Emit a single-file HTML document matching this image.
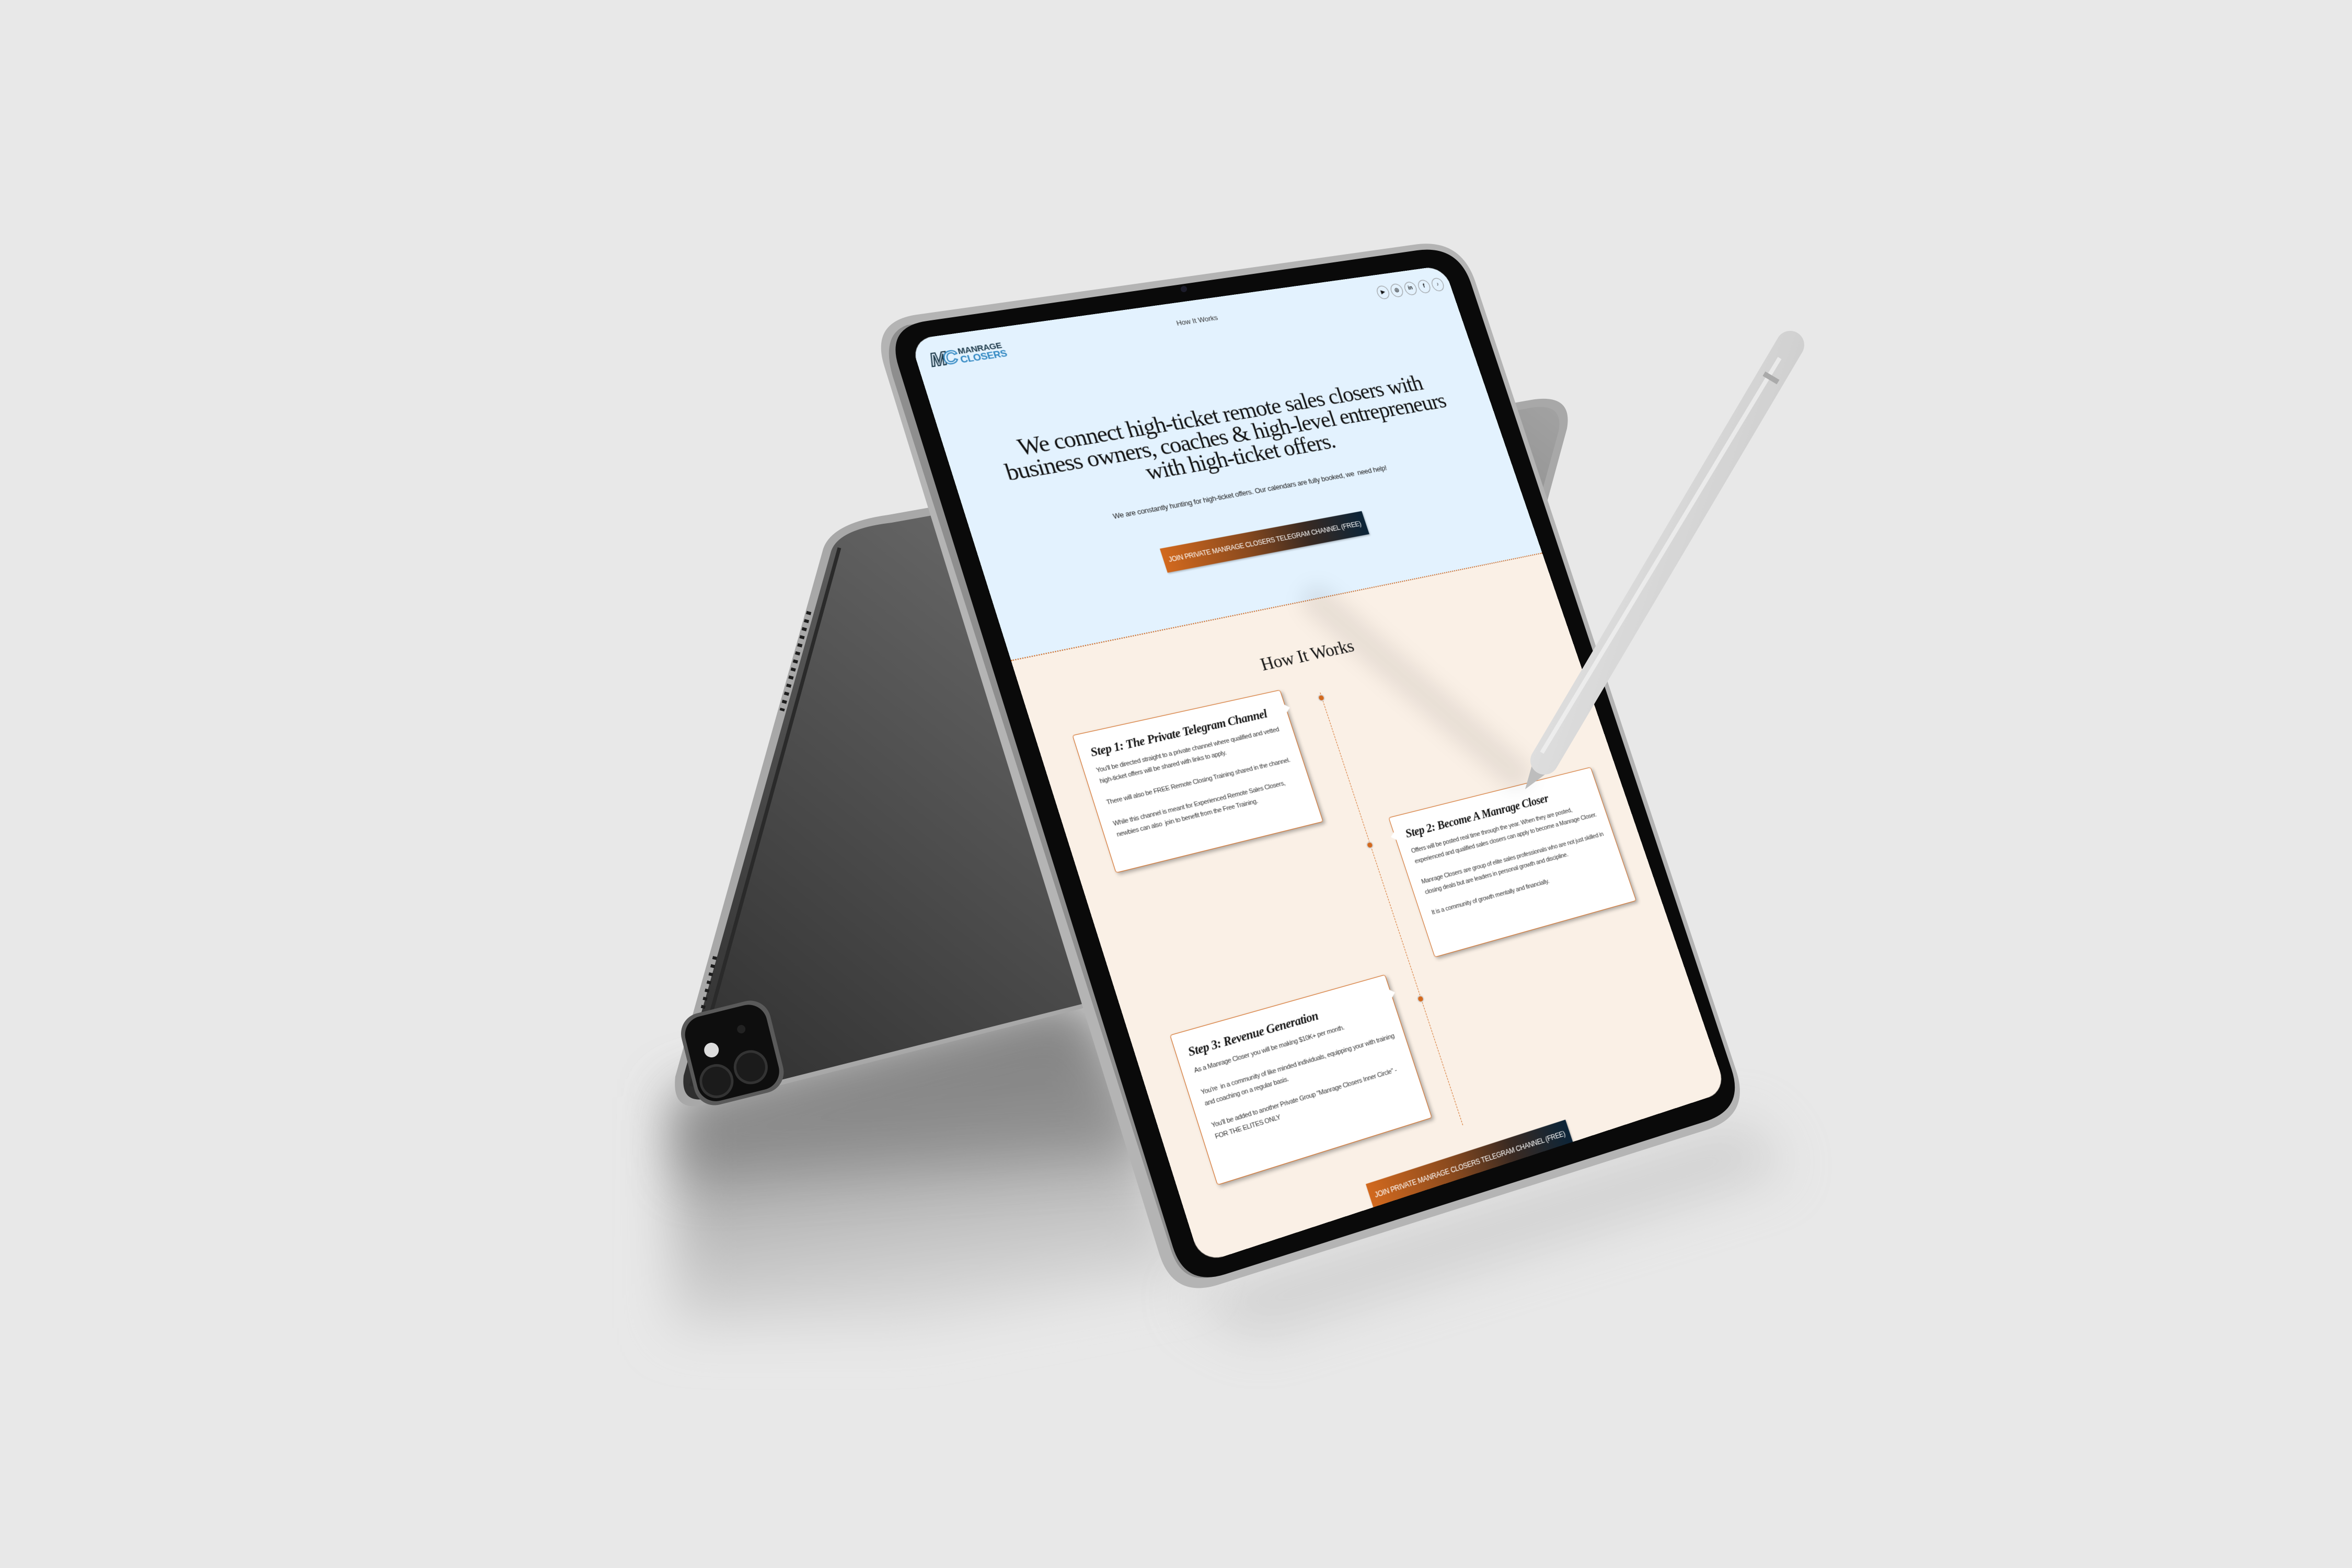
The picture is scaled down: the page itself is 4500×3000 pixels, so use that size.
<!DOCTYPE html>
<html><head><meta charset="utf-8">
<style>
html,body{margin:0;padding:0}
body{width:4500px;height:3000px;background:#e8e8e8;position:relative;overflow:hidden;font-family:"Liberation Sans",sans-serif}
svg.l{position:absolute;left:0;top:0;width:4500px;height:3000px}
#scr{position:absolute;left:0;top:0;width:1000px;height:1600px;transform-origin:0 0;
transform:matrix3d(1.3241,-0.08625,0,0.00010975,0.284625,1.03819,0,-0.000027638,0,0,1,0,1741,650,0,1);
border-radius:38px;overflow:hidden;background:#faf0e6}
.hero{position:absolute;left:0;top:0;width:1000px;height:571px;background:#e3f2fe;border-bottom:2px dotted #d2691e}
.logo{position:absolute;left:22px;top:20px;width:130px;height:40px}
.mc{position:absolute;left:0;top:2px;font:italic 900 34px "Liberation Sans",sans-serif;color:#e3f2fe;-webkit-text-stroke:2px #1d3a4a;letter-spacing:-6px}
.mc b{-webkit-text-stroke:2px #2e86c1}
.lt{position:absolute;left:50px;top:5px;font:900 15px/15px "Liberation Sans",sans-serif;color:#1d3a4a;letter-spacing:-.3px}
.lt span{color:#2e86c1;font-size:17px}
.nav{position:absolute;left:0;width:1000px;top:30px;text-align:center;font-size:13px;color:#333}
.soc{position:absolute;left:852px;top:22px;display:flex;gap:5px}
.soc i{display:block;width:21px;height:24px;border:1px solid #888;border-radius:50%;font:bold 10px/24px "Liberation Sans",sans-serif;text-align:center;font-style:normal;color:#111}
h1{position:absolute;left:0;top:196px;width:1000px;margin:0;text-align:center;font:400 42px/40px "Liberation Serif",serif;letter-spacing:-1.3px;color:#111}
.sub{position:absolute;left:0;top:354px;width:1000px;text-align:center;font-size:13px;color:#222;letter-spacing:-.3px}
.btn{position:absolute;left:304px;width:380px;height:44px;background:linear-gradient(90deg,#d2691e 0%,#8a4a1e 40%,#3a2a22 70%,#0b2438 100%);color:#fff;font:12px/44px "Liberation Sans",sans-serif;text-align:center;letter-spacing:-.3px;box-shadow:1px 2px 3px rgba(0,0,0,.25)}
h2{position:absolute;left:0;top:648px;width:1000px;margin:0;text-align:center;font:400 32px "Liberation Serif",serif;color:#111;letter-spacing:-.5px}
.line{position:absolute;left:500px;top:736px;height:780px;border-left:1px dashed #d2691e}
.dot{position:absolute;left:495px;width:9px;height:9px;border-radius:50%;background:#d2691e;box-shadow:0 0 0 2px #ddd}
.card{position:absolute;background:#fff;border:1px solid #d2691e;border-radius:4px;box-shadow:3px 4px 6px rgba(0,0,0,.3);padding:22px 16px 16px 20px;box-sizing:border-box}
.card h3{margin:0 0 10px;font:italic 700 21px "Liberation Serif",serif;color:#111;letter-spacing:-.5px}
.card p{margin:0 0 18px;font:11px/19px "Liberation Sans Narrow","Liberation Sans",sans-serif;color:#333;letter-spacing:-.35px}
.nr::after{content:"";position:absolute;right:-8px;top:26px;border:7px solid transparent;border-left:8px solid #fff;border-right:0}
.nl::after{content:"";position:absolute;left:-8px;top:26px;border:7px solid transparent;border-right:8px solid #fff;border-left:0}
</style></head><body>

<svg class="l" viewBox="0 0 4500 3000">
<defs>
<filter id="b1" x="-50%" y="-50%" width="200%" height="200%"><feGaussianBlur stdDeviation="50"/></filter>
<linearGradient id="sh" x1="0" y1="0" x2="0.2" y2="1"><stop offset="0" stop-color="#747474"/><stop offset="1" stop-color="#dadada"/></linearGradient>
<linearGradient id="back" x1="1" y1="0" x2="0" y2="1"><stop offset="0" stop-color="#a2a2a2"/><stop offset="0.35" stop-color="#6c6c6c"/><stop offset="1" stop-color="#2e2e2e"/></linearGradient>
</defs>
<polygon points="1290,2100 2070,1910 2280,2440 1750,2540 1290,2540" fill="url(#sh)" filter="url(#b1)"/>
<polygon points="1300,2110 2060,1915 2250,2200 1300,2250" fill="#777" opacity=".5" filter="url(#b1)"/>
<polygon points="2260,2480 3340,2140 3420,2240 2400,2560" fill="#bbb" opacity=".5" filter="url(#b1)"/>
<path d="M1700,985 L2930,765 Q3010,752 2998,820 L2960,960 L2500,1820 L1340,2115 Q1285,2125 1292,2060 L1575,1050 Q1592,1000 1700,985 Z" fill="#a8a8a8"/>
<path d="M1706,1000 L2930,780 Q2992,770 2982,825 L2945,960 L2490,1815 L1352,2102 Q1302,2112 1308,2058 L1590,1055 Q1604,1012 1706,1000 Z" fill="url(#back)"/>
<path d="M1606,1048 L1322,2078" stroke="#2a2a2a" stroke-width="7" fill="none"/>
<path d="M1548,1170 L1496,1360" stroke="#1e1e1e" stroke-width="9" stroke-dasharray="6 10" fill="none"/>
<path d="M1368,1830 L1334,1975" stroke="#1e1e1e" stroke-width="8" stroke-dasharray="6 10" fill="none"/>
<g transform="translate(1400,2020) rotate(-14)">
<rect x="-85" y="-95" width="175" height="180" rx="40" fill="#5a5a5a"/>
<rect x="-78" y="-88" width="160" height="166" rx="36" fill="#0e0e0e"/>
<circle cx="-35" cy="-20" r="14" fill="#ddd"/>
<circle cx="-40" cy="40" r="30" fill="#1b1b1b" stroke="#333" stroke-width="5"/>
<circle cx="30" cy="30" r="30" fill="#1b1b1b" stroke="#333" stroke-width="5"/>
<circle cx="30" cy="-45" r="8" fill="#222"/>
</g>
<path d="M1754,602 L2706,468 Q2795,455 2823,540 L3322,2049 Q3350,2135 3264,2162 L2331,2458 Q2245,2485 2218,2399 L1692,701 Q1665,615 1754,602 Z" fill="#b4b4b4"/>
<path d="M1735,622 L2706,484 Q2785,472 2808,548 L3308,2046 Q3330,2115 3260,2138 L2330,2440 Q2262,2462 2240,2390 L1708,720 Q1685,640 1735,622 Z" fill="#8e8e8e"/>
<path d="M1774,614 L2711,479 Q2790,468 2815,544 L3313,2046 Q3338,2122 3262,2146 L2344,2438 Q2268,2462 2244,2386 L1719,701 Q1695,625 1774,614 Z" fill="#0a0a0a"/>
<circle cx="2265" cy="553" r="6" fill="#1c1c2a"/>
</svg>

<div id="scr">
 <div class="hero">
  <div class="logo"><div class="mc">M<b>C</b></div><div class="lt">MANRAGE<br><span>CLOSERS</span></div></div>
  <div class="nav">How It Works</div>
  <div class="soc"><i>▶</i><i>◎</i><i>in</i><i>f</i><i>♪</i></div>
  <h1>We connect high-ticket remote sales closers with<br>business owners, coaches &amp; high-level entrepreneurs<br>with high-ticket offers.</h1>
  <div class="sub">We are constantly hunting for high-ticket offers. Our calendars are fully booked, we&nbsp; need help!</div>
  <div class="btn" style="top:432px">JOIN PRIVATE MANRAGE CLOSERS TELEGRAM CHANNEL (FREE)</div>
 </div>
 <h2>How It Works</h2>
 <div class="line"></div>
 <div class="dot" style="top:741px"></div>
 <div class="dot" style="top:1010px"></div>
 <div class="dot" style="top:1287px"></div>
 <div class="card nr" style="left:60px;top:716px;width:372px;height:240px">
  <h3>Step 1: The Private Telegram Channel</h3>
  <p>You'll be directed straight to a private channel where qualified and vetted high-ticket offers will be shared with links to apply.</p>
  <p>There will also be FREE Remote Closing Training shared in the channel.</p>
  <p>While this channel is meant for Experienced Remote Sales Closers, newbies can also&nbsp; join to benefit from the Free Training.</p>
 </div>
 <div class="card nl" style="left:548px;top:976px;width:404px;height:254px">
  <h3>Step 2: Become A Manrage Closer</h3>
  <p>Offers will be posted real time through the year. When they are posted, experienced and qualified sales closers can apply to become a Manrage Closer.</p>
  <p>Manrage Closers are group of elite sales professionals who are not just skilled in closing deals but are leaders in personal growth and discipline.</p>
  <p>It is a community of growth mentally and financially.</p>
 </div>
 <div class="card nr" style="left:64px;top:1235px;width:388px;height:254px">
  <h3>Step 3: Revenue Generation</h3>
  <p>As a Manrage Closer you will be making $10K+ per month.</p>
  <p>You're&nbsp; in a community of like minded individuals, equipping your with training and coaching on a regular basis.</p>
  <p>You'll be added to another Private Group "Manrage Closers Inner Circle" - FOR THE ELITES ONLY</p>
 </div>
 <div class="btn" style="top:1560px">JOIN PRIVATE MANRAGE CLOSERS TELEGRAM CHANNEL (FREE)</div>
</div>

<svg class="l" viewBox="0 0 4500 3000">
<defs>
<linearGradient id="pen2" x1="0" y1="0" x2="1" y2="0.6"><stop offset="0" stop-color="#ececec"/><stop offset="0.5" stop-color="#dadada"/><stop offset="1" stop-color="#c8c8c8"/></linearGradient>
<filter id="b3" x="-50%" y="-50%" width="200%" height="200%"><feGaussianBlur stdDeviation="18"/></filter>
</defs>
<line x1="2900" y1="1480" x2="2520" y2="1150" stroke="#000" stroke-opacity=".07" stroke-width="60" stroke-linecap="round" filter="url(#b3)"/>
<polygon points="2935,1450 2972,1470 2918,1510" fill="#bdbdbd"/>
<line x1="3425" y1="660" x2="2955" y2="1455" stroke="url(#pen2)" stroke-width="54" stroke-linecap="round"/>
<line x1="3405" y1="685" x2="2950" y2="1440" stroke="#f4f4f4" stroke-width="8" stroke-opacity=".7"/>
<line x1="3375" y1="715" x2="3402" y2="731" stroke="#aaa" stroke-width="10"/>
</svg>
</body></html>
